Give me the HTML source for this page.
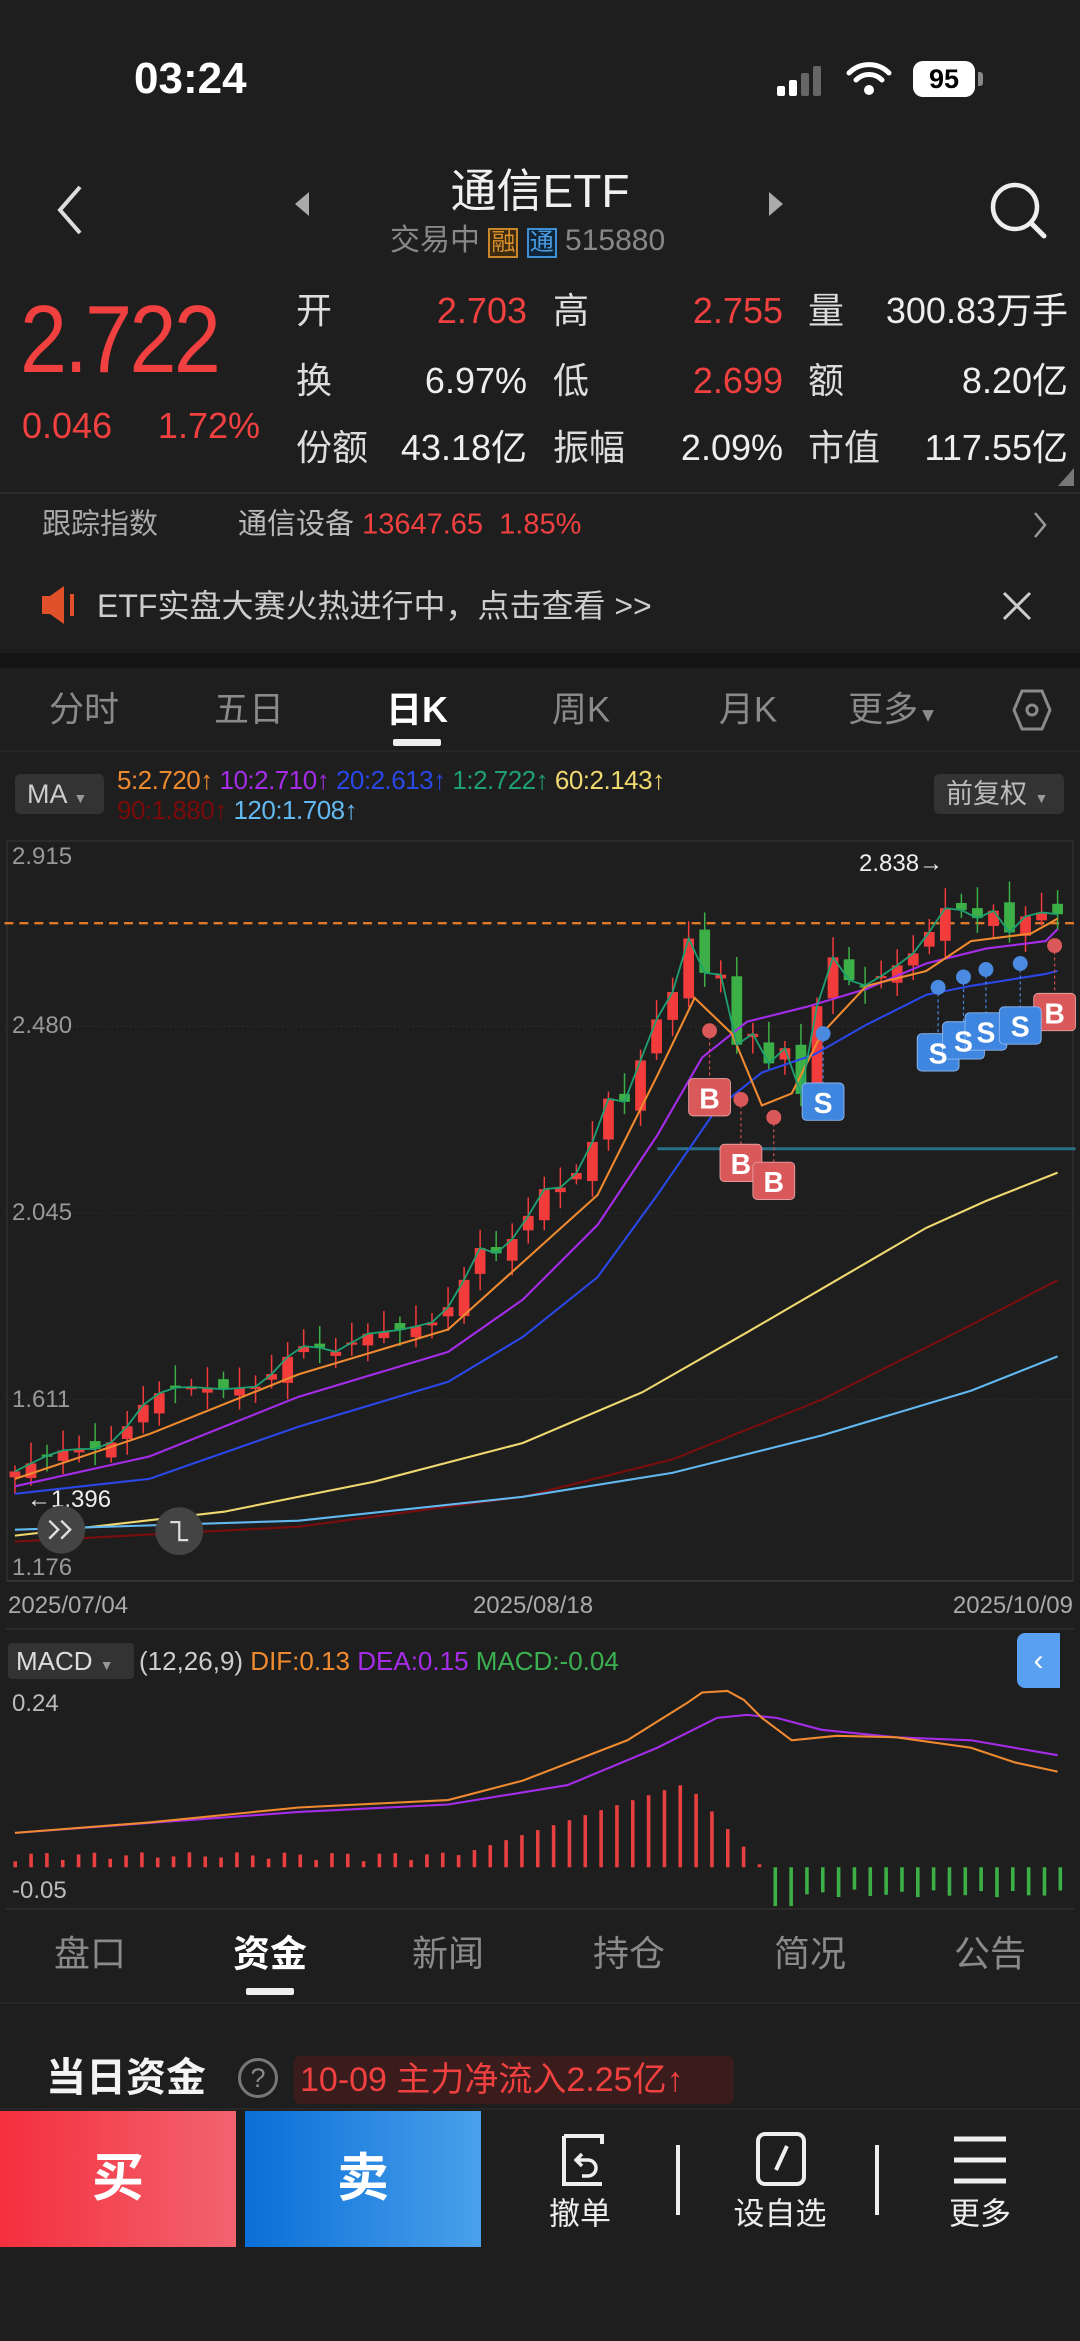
<!DOCTYPE html>
<html><head><meta charset="utf-8"><style>
*{margin:0;padding:0;box-sizing:border-box}
body{width:1080px;height:2341px;background:#1e1e1e;position:relative;overflow:hidden;font-family:"Liberation Sans","Noto Sans CJK SC",sans-serif;color:#e8e8e8}
.a{position:absolute;white-space:nowrap;line-height:1}
.r{color:#f0403f}
.g{color:#8c8c8c}
.cy{transform:translateY(-50%)}
.cx{transform:translate(-50%,-50%)}
.rt{transform:translate(-100%,-50%)}
</style></head><body>
<!-- status -->
<div class="a cy" style="left:134px;top:79px;font-size:44px;font-weight:bold;color:#fff">03:24</div>
<div class="a" style="left:777px;top:64px;width:48px;height:32px">
 <div style="position:absolute;left:0;bottom:0;width:8px;height:10px;background:#fff;border-radius:2px"></div>
 <div style="position:absolute;left:12px;bottom:0;width:8px;height:16px;background:#fff;border-radius:2px"></div>
 <div style="position:absolute;left:24px;bottom:0;width:8px;height:23px;background:#666;border-radius:2px"></div>
 <div style="position:absolute;left:36px;bottom:0;width:8px;height:30px;background:#666;border-radius:2px"></div>
</div>
<svg class="a" style="left:846px;top:60px" width="46" height="36" viewBox="0 0 46 36"><path d="M3 13 A28 28 0 0 1 43 13" stroke="#fff" stroke-width="5" fill="none" stroke-linecap="round"/><path d="M10 20 A18 18 0 0 1 36 20" stroke="#fff" stroke-width="5" fill="none" stroke-linecap="round"/><circle cx="23" cy="30" r="5" fill="#fff"/></svg>
<div class="a" style="left:913px;top:61px;width:62px;height:36px;background:#fff;border-radius:10px;color:#000;font-size:27px;font-weight:bold;text-align:center;line-height:36px">95</div>
<div class="a" style="left:978px;top:72px;width:5px;height:14px;background:#888;border-radius:0 3px 3px 0"></div>

<!-- nav -->
<svg class="a" style="left:52px;top:183px" width="34" height="54"><path d="M28 4 L8 27 L28 50" stroke="#ddd" stroke-width="4" fill="none"/></svg>
<svg class="a" style="left:293px;top:190px" width="18" height="28"><path d="M16 2 L2 14 L16 26Z" fill="#aaa"/></svg>
<svg class="a" style="left:767px;top:190px" width="18" height="28"><path d="M2 2 L16 14 L2 26Z" fill="#aaa"/></svg>
<div class="a cx" style="left:540px;top:191px;font-size:46px;color:#f0f0f0">通信ETF</div>
<div class="a cy" style="left:390px;top:242px;font-size:30px;color:#888">交易中 <span style="display:inline-block;font-size:24px;border:2px solid #c8862a;color:#d8902e;background:#3a2a10;padding:1px 1px">融</span> <span style="display:inline-block;font-size:24px;border:2px solid #3d8fd6;color:#4a9be0;background:#102438;padding:1px 1px">通</span> 515880</div>
<svg class="a" style="left:988px;top:180px" width="62" height="62"><circle cx="27" cy="27" r="22" stroke="#eee" stroke-width="4.5" fill="none"/><path d="M43 43 L56 56" stroke="#eee" stroke-width="5" stroke-linecap="round"/></svg>

<!-- price block -->
<div class="a cy r" style="left:20px;top:340px;font-size:96px;letter-spacing:-3px;transform:translateY(-50%) scaleX(.88);transform-origin:left">2.722</div>
<div class="a cy r" style="left:22px;top:426px;font-size:36px">0.046</div>
<div class="a rt r" style="left:260px;top:426px;font-size:36px">1.72%</div>

<div class="a cy" style="left:296px;top:311px;font-size:36px;color:#ddd">开</div>
<div class="a rt r" style="left:527px;top:311px;font-size:36px">2.703</div>
<div class="a cy" style="left:553px;top:311px;font-size:36px;color:#ddd">高</div>
<div class="a rt r" style="left:783px;top:311px;font-size:36px">2.755</div>
<div class="a cy" style="left:808px;top:311px;font-size:36px;color:#ddd">量</div>
<div class="a rt" style="left:1068px;top:311px;font-size:36px;color:#eee">300.83万手</div>

<div class="a cy" style="left:296px;top:381px;font-size:36px;color:#ddd">换</div>
<div class="a rt" style="left:527px;top:381px;font-size:36px;color:#eee">6.97%</div>
<div class="a cy" style="left:553px;top:381px;font-size:36px;color:#ddd">低</div>
<div class="a rt r" style="left:783px;top:381px;font-size:36px">2.699</div>
<div class="a cy" style="left:808px;top:381px;font-size:36px;color:#ddd">额</div>
<div class="a rt" style="left:1068px;top:381px;font-size:36px;color:#eee">8.20亿</div>

<div class="a cy" style="left:296px;top:448px;font-size:36px;color:#ddd">份额</div>
<div class="a rt" style="left:527px;top:448px;font-size:36px;color:#eee">43.18亿</div>
<div class="a cy" style="left:553px;top:448px;font-size:36px;color:#ddd">振幅</div>
<div class="a rt" style="left:783px;top:448px;font-size:36px;color:#eee">2.09%</div>
<div class="a cy" style="left:808px;top:448px;font-size:36px;color:#ddd">市值</div>
<div class="a rt" style="left:1068px;top:448px;font-size:36px;color:#eee">117.55亿</div>
<svg class="a" style="left:1058px;top:468px" width="16" height="18"><path d="M16 0 L16 18 L0 18Z" fill="#777"/></svg>

<div class="a" style="left:0;top:492px;width:1080px;height:2px;background:#2c2c2c"></div>
<div class="a cy" style="left:42px;top:525px;font-size:29px;color:#aaa">跟踪指数</div>
<div class="a cy" style="left:238px;top:525px;font-size:29px;color:#bbb">通信设备 <span class="r">13647.65 &nbsp;1.85%</span></div>
<svg class="a" style="left:1032px;top:510px" width="16" height="30"><path d="M3 3 L13 15 L3 27" stroke="#999" stroke-width="2.5" fill="none"/></svg>

<svg class="a" style="left:40px;top:584px" width="40" height="42"><path d="M2 12 H10 L24 2 V40 L10 30 H2Z" fill="#e0502a"/><rect x="30" y="10" width="4" height="22" fill="#e0502a"/></svg>
<div class="a cy" style="left:97px;top:606px;font-size:32px;color:#ccc">ETF实盘大赛火热进行中，点击查看 &gt;&gt;</div>
<svg class="a" style="left:1001px;top:590px" width="32" height="32"><path d="M3 3 L29 29 M29 3 L3 29" stroke="#ccc" stroke-width="3"/></svg>

<div class="a" style="left:0;top:653px;width:1080px;height:15px;background:#141414"></div>

<!-- period tabs -->
<div class="a cx" style="left:84px;top:710px;font-size:35px;color:#8a8a8a">分时</div>
<div class="a cx" style="left:249px;top:710px;font-size:35px;color:#8a8a8a">五日</div>
<div class="a cx" style="left:417px;top:710px;font-size:36px;color:#fff;font-weight:bold">日K</div>
<div class="a cx" style="left:581px;top:710px;font-size:35px;color:#8a8a8a">周K</div>
<div class="a cx" style="left:748px;top:710px;font-size:35px;color:#8a8a8a">月K</div>
<div class="a cx" style="left:893px;top:710px;font-size:35px;color:#8a8a8a">更多<span style="font-size:20px">▼</span></div>
<svg class="a" style="left:1012px;top:688px" width="40" height="44"><path d="M10 3 H30 L38 22 L30 41 H10 L2 22Z" stroke="#8a8a8a" stroke-width="3" fill="none"/><circle cx="20" cy="22" r="5" stroke="#8a8a8a" stroke-width="3" fill="none"/></svg>
<div class="a" style="left:393px;top:739px;width:48px;height:7px;background:#eee;border-radius:2px"></div>
<div class="a" style="left:0;top:750px;width:1080px;height:2px;background:#262626"></div>

<!-- MA legend -->
<div class="a" style="left:15px;top:774px;width:89px;height:40px;background:#333;border-radius:5px;font-size:27px;color:#ccc;line-height:40px;padding-left:12px">MA <span style="font-size:14px;color:#999">▼</span></div>
<div class="a cy" style="left:117px;top:780px;font-size:26px;letter-spacing:-0.5px"><span style="color:#f08a30">5:2.720↑</span> <span style="color:#a52ce8">10:2.710↑</span> <span style="color:#2a48e8">20:2.613↑</span> <span style="color:#1ea070">1:2.722↑</span> <span style="color:#f0d870">60:2.143↑</span></div>
<div class="a cy" style="left:117px;top:810px;font-size:26px;letter-spacing:-0.5px"><span style="color:#7a0a0a">90:1.880↑</span> <span style="color:#62b8f0">120:1.708↑</span></div>
<div class="a" style="left:934px;top:774px;width:130px;height:40px;background:#333;border-radius:5px;font-size:27px;color:#bbb;line-height:40px;padding-left:12px">前复权 <span style="font-size:14px;color:#999">▼</span></div>

<!-- chart frame -->
<div class="a" style="left:6px;top:840px;width:1068px;height:742px;border:2px solid #2a2a2a;border-bottom-color:#333"></div>
<div class="a" style="left:6px;top:1628px;width:1068px;height:2px;background:#2a2a2a"></div>
<div class="a" style="left:6px;top:1908px;width:1068px;height:2px;background:#2a2a2a"></div>
<div class="a cy" style="left:12px;top:857px;font-size:24px;color:#999">2.915</div>
<div class="a cy" style="left:12px;top:1026px;font-size:24px;color:#999">2.480</div>
<div class="a cy" style="left:12px;top:1213px;font-size:24px;color:#999">2.045</div>
<div class="a cy" style="left:12px;top:1400px;font-size:24px;color:#999">1.611</div>
<div class="a cy" style="left:12px;top:1568px;font-size:24px;color:#999">1.176</div>
<div class="a cy" style="left:8px;top:1606px;font-size:24px;color:#aaa">2025/07/04</div>
<div class="a cx" style="left:533px;top:1606px;font-size:24px;color:#aaa">2025/08/18</div>
<div class="a rt" style="left:1073px;top:1606px;font-size:24px;color:#aaa">2025/10/09</div>
<div class="a cy" style="left:859px;top:864px;font-size:24px;color:#eee">2.838→</div>
<div class="a cy" style="left:27px;top:1500px;font-size:24px;color:#eee">←1.396</div>

<svg class="a" style="left:0;top:0" width="1080" height="2341">
<g transform="scale(1.4938)" fill="none">
 <line x1="3" y1="1025" x2="720" y2="1025" stroke="#2a2a2a" stroke-width=".6" stroke-dasharray="1 2"/>
 <line x1="3" y1="687" x2="720" y2="687" stroke="#333" stroke-width=".6" stroke-dasharray="1 2"/>
 <line x1="3" y1="812" x2="720" y2="812" stroke="#333" stroke-width=".6" stroke-dasharray="1 2"/>
 <line x1="3" y1="937" x2="720" y2="937" stroke="#333" stroke-width=".6" stroke-dasharray="1 2"/>
 <line x1="3" y1="618" x2="720" y2="618" stroke="#e0782a" stroke-width="1.6" stroke-dasharray="6 4"/>
 <line x1="440" y1="769" x2="720" y2="769" stroke="#2a6f88" stroke-width="2"/>
 <g id="candles"></g>
 <polyline stroke="#f0d870" stroke-width="1.4" points="10,1028 150,1012 250,992 350,966 430,932 500,892 560,857 620,822 660,804 708,785"/>
 <polyline stroke="#7a0e0e" stroke-width="1.4" points="10,1032 200,1022 350,1002 450,977 550,937 650,887 708,857"/>
 <polyline stroke="#62b8f0" stroke-width="1.4" points="10,1024 200,1018 350,1002 450,986 550,961 650,931 708,908"/>
 <polyline stroke="#2a48e8" stroke-width="1.4" points="10,1000 100,990 200,955 300,925 350,895 400,855 440,800 480,742 510,718 545,706 580,686 620,666 650,660 700,652 708,650"/>
 <polyline stroke="#a52ce8" stroke-width="1.4" points="10,995 100,975 200,935 300,905 350,870 400,820 440,760 470,708 500,684 540,674 580,662 620,645 660,635 700,630 708,622"/>
 <polyline stroke="#f08a30" stroke-width="1.4" points="10,990 100,960 200,920 300,890 350,845 400,800 440,720 465,668 490,692 510,740 530,732 550,692 580,660 620,650 650,630 690,625 708,615"/>
 <polyline id="l1" stroke="#1ea070" stroke-width="1.2" points=""/>
 <!-- markers -->
 <g stroke="#d05050" stroke-width=".8" stroke-dasharray="2 2"><line x1="475" y1="690" x2="475" y2="722"/><line x1="496" y1="736" x2="496" y2="766"/><line x1="518" y1="748" x2="518" y2="778"/><line x1="706" y1="633" x2="706" y2="665"/></g>
 <g stroke="#4a8ae0" stroke-width=".8" stroke-dasharray="2 2"><line x1="551" y1="692" x2="551" y2="725"/><line x1="628" y1="661" x2="628" y2="692"/><line x1="645" y1="654" x2="645" y2="684"/><line x1="660" y1="649" x2="660" y2="678"/><line x1="683" y1="645" x2="683" y2="674"/></g>
 <g fill="#d9585a"><circle cx="475" cy="690" r="5"/><circle cx="496" cy="736" r="5"/><circle cx="518" cy="748" r="5"/><circle cx="706" cy="633" r="5"/></g>
 <g fill="#4a8ae0"><circle cx="551" cy="692" r="5"/><circle cx="628" cy="661" r="5"/><circle cx="645" cy="654" r="5"/><circle cx="660" cy="649" r="5"/><circle cx="683" cy="645" r="5"/></g>
 <g fill="#d9585a" stroke="#e8a0a0" stroke-width=".6"><rect x="461" y="722" width="28" height="25" rx="3"/><rect x="482" y="766" width="28" height="25" rx="3"/><rect x="504" y="778" width="28" height="25" rx="3"/><rect x="692" y="665" width="28" height="25" rx="3"/></g>
 <g fill="#3f86e0" stroke="#90b8f0" stroke-width=".6"><rect x="537" y="725" width="28" height="25" rx="3"/><rect x="614" y="692" width="28" height="25" rx="3"/><rect x="631" y="684" width="28" height="25" rx="3"/><rect x="646" y="678" width="28" height="25" rx="3"/><rect x="669" y="674" width="28" height="25" rx="3"/></g>
 <g fill="#fff" font-size="19" font-family="Liberation Sans" font-weight="bold" text-anchor="middle">
  <text x="475" y="742">B</text><text x="496" y="786">B</text><text x="518" y="798">B</text><text x="706" y="685">B</text>
  <text x="551" y="745">S</text><text x="628" y="712">S</text><text x="645" y="704">S</text><text x="660" y="698">S</text><text x="683" y="694">S</text>
 </g>
 <circle cx="41" cy="1024" r="16" fill="#444"/><path d="M33 1018 l6 6 -6 6 M41 1018 l6 6 -6 6" stroke="#ddd" stroke-width="1.6"/>
 <circle cx="120" cy="1025" r="16" fill="#444"/><path d="M114 1019 h6 v6 M126 1031 h-6 v-6" stroke="#ddd" stroke-width="1.5"/>
 <!-- MACD -->
 <g id="hist"></g>
 <polyline stroke="#a52ce8" stroke-width="1.4" points="10,1227 200,1213 300,1208 380,1195 440,1170 480,1150 500,1148 520,1150 550,1158 600,1163 650,1165 708,1175"/>
 <polyline stroke="#f08a30" stroke-width="1.4" points="10,1227 100,1220 200,1210 300,1205 350,1192 420,1165 460,1140 470,1133 487,1132 498,1138 510,1150 530,1165 560,1162 600,1163 650,1170 680,1180 708,1186"/>
</g>
</svg>

<div class="a" style="left:8px;top:1643px;width:126px;height:36px;background:#333;border-radius:4px;font-size:26px;color:#ddd;line-height:36px;padding-left:8px">MACD <span style="font-size:14px;color:#999">▼</span></div>
<div class="a cy" style="left:139px;top:1661px;font-size:26px;color:#ccc">(12,26,9) <span style="color:#f08a30">DIF:0.13</span> <span style="color:#a52ce8">DEA:0.15</span> <span style="color:#3cb050">MACD:-0.04</span></div>
<div class="a" style="left:1017px;top:1633px;width:43px;height:55px;background:#5aa0f0;border-radius:8px 0 0 8px;color:#fff;font-size:30px;text-align:center;line-height:55px">‹</div>
<div class="a cy" style="left:12px;top:1704px;font-size:24px;color:#bbb">0.24</div>
<div class="a cy" style="left:12px;top:1891px;font-size:24px;color:#bbb">-0.05</div>

<!-- bottom tabs -->
<div class="a cx" style="left:90px;top:1954px;font-size:36px;color:#8a8a8a">盘口</div>
<div class="a cx" style="left:270px;top:1954px;font-size:37px;color:#fff;font-weight:bold">资金</div>
<div class="a cx" style="left:448px;top:1954px;font-size:36px;color:#8a8a8a">新闻</div>
<div class="a cx" style="left:629px;top:1954px;font-size:36px;color:#8a8a8a">持仓</div>
<div class="a cx" style="left:810px;top:1954px;font-size:36px;color:#8a8a8a">简况</div>
<div class="a cx" style="left:990px;top:1954px;font-size:36px;color:#8a8a8a">公告</div>
<div class="a" style="left:246px;top:1988px;width:48px;height:7px;background:#eee;border-radius:2px"></div>
<div class="a" style="left:0;top:2002px;width:1080px;height:2px;background:#262626"></div>

<div class="a cy" style="left:46px;top:2078px;font-size:40px;font-weight:bold;color:#f4f4f4">当日资金</div>
<div class="a" style="left:238px;top:2058px;width:40px;height:40px;border:3px solid #777;border-radius:50%;color:#888;font-size:27px;text-align:center;line-height:34px">?</div>
<div class="a" style="left:294px;top:2056px;width:440px;height:48px;background:#3a1c1c;border-radius:6px;color:#f0403f;font-size:34px;line-height:48px;padding-left:6px">10-09 主力净流入2.25亿↑</div>
<div class="a" style="left:0;top:2108px;width:1080px;height:2px;background:#262626"></div>

<div class="a" style="left:0;top:2111px;width:236px;height:136px;background:linear-gradient(90deg,#f52f3e,#f2636f);color:#fff;font-size:52px;font-weight:bold;text-align:center;line-height:136px">买</div>
<div class="a" style="left:245px;top:2111px;width:236px;height:136px;background:linear-gradient(90deg,#0a6fd8,#4aa0ea);color:#fff;font-size:52px;font-weight:bold;text-align:center;line-height:136px">卖</div>
<svg class="a" style="left:556px;top:2132px" width="50" height="56"><path d="M8 4 H46 V12 M8 4 V52 H46" stroke="#eee" stroke-width="4" fill="none"/><path d="M26 22 L20 28 L26 34 M20 28 H32 A8 8 0 0 1 32 44 H26" stroke="#eee" stroke-width="3.5" fill="none"/></svg>
<div class="a cx" style="left:580px;top:2214px;font-size:31px;color:#eee">撤单</div>
<div class="a" style="left:676px;top:2145px;width:4px;height:70px;background:#eee"></div>
<svg class="a" style="left:754px;top:2130px" width="54" height="58"><rect x="4" y="4" width="46" height="50" rx="7" stroke="#eee" stroke-width="4" fill="none"/><path d="M33 16 L22 40" stroke="#eee" stroke-width="4"/></svg>
<div class="a cx" style="left:780px;top:2214px;font-size:31px;color:#eee">设自选</div>
<div class="a" style="left:875px;top:2145px;width:4px;height:70px;background:#eee"></div>
<svg class="a" style="left:952px;top:2134px" width="56" height="52"><path d="M2 5 H54 M2 26 H54 M2 47 H54" stroke="#eee" stroke-width="5"/></svg>
<div class="a cx" style="left:980px;top:2214px;font-size:31px;color:#eee">更多</div>

<script>
(function(){
var kp=[[10,985],[30,975],[45,970],[70,970],[85,955],[100,935],[120,928],[150,930],[175,928],[190,910],[205,900],[225,905],[245,893],[270,890],[290,885],[305,870],[320,835],[335,840],[350,820],[365,795],[380,795],[395,770],[405,735],[420,738],[435,690],[450,665],[462,625],[475,660],[485,650],[495,710],[505,690],[512,715],[525,700],[535,738],[545,690],[552,630],[565,655],[580,660],[595,650],[610,640],[625,620],[638,600],[650,620],[662,605],[675,625],[690,610],[708,612]];
function f(x){for(var i=1;i<kp.length;i++){if(x<=kp[i][0]){var a=kp[i-1],b=kp[i];return a[1]+(b[1]-a[1])*(x-a[0])/(b[0]-a[0]);}}return kp[kp.length-1][1];}
var n=66,s='',pts=[],prev=f(10)+4;
for(var i=0;i<n;i++){var x=10+i*(698/(n-1));var c=f(x);var o=prev+Math.sin(i*2.3)*6;
 var up=c<o;var col=up?'#f23b3b':'#3cb046';var t=Math.min(o,c),b=Math.max(o,c);if(b-t<1.5)b=t+1.5;
 var hi=t-4-Math.abs(Math.sin(i*1.7))*10,lo=b+3+Math.abs(Math.cos(i*1.3))*8;
 s+='<line x1="'+x+'" y1="'+hi+'" x2="'+x+'" y2="'+lo+'" stroke="'+col+'" stroke-width="1"/>';
 s+='<rect x="'+(x-3.6)+'" y="'+t+'" width="7.2" height="'+(b-t)+'" fill="'+col+'"/>';
 pts.push(x+','+c);prev=c;}
document.getElementById('candles').innerHTML=s;
document.getElementById('l1').setAttribute('points',pts.join(' '));
var h='';
for(var i=0;i<67;i++){var x=10+i*10.6;var top,col;
 if(x<510){var v=x<300?4+Math.abs(Math.sin(i))*6:(x<465?(x-300)/165*52+6:(510-x)/45*50);top=1250-v;col='#e84040';h+='<rect x="'+(x-1)+'" y="'+top+'" width="2.4" height="'+(1250-top)+'" fill="'+col+'"/>';}
 else{var v=x<530?26:14+Math.abs(Math.sin(i*1.9))*6;h+='<rect x="'+(x-1)+'" y="1250" width="2.4" height="'+v+'" fill="#3cb046"/>';}}
document.getElementById('hist').innerHTML=h;
})();
</script>
</body></html>
